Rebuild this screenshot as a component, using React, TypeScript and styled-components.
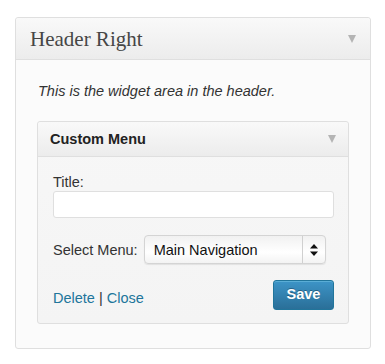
import styled, { createGlobalStyle } from 'styled-components'

const GlobalStyle = createGlobalStyle`
    html, body {
        margin: 0;
        padding: 0;
        background: #ffffff;
        font-family: "Liberation Sans", Arial, sans-serif;
        color: #333333;
    }
`
const Page = styled.div`
    padding: 17px 14px 15px 15px;
`
const Sidebar = styled.div`
    width: 354px;
    height: 330px;
    border: 1px solid #dfdfdf;
    border-radius: 3px;
    background: #fbfbfb;
    display: flex;
    flex-direction: column;
`
const SidebarHeader = styled.div`
    height: 41px;
    display: flex;
    align-items: center;
    justify-content: space-between;
    padding: 0 14px 0 14px;
    background: linear-gradient(to bottom, #f9f9f9, #ececec);
    border-bottom: 1px solid #dfdfdf;
    border-radius: 3px 3px 0 0;
`
const SidebarTitle = styled.h3`
    margin: 0;
    font-family: "Liberation Serif", Georgia, serif;
    font-weight: normal;
    font-size: 21px;
    color: #464646;
    padding-top: 1px;
`
const Toggle = styled.span<{ $size: number }>`
    width: 0;
    height: 0;
    border-left: ${props => props.$size / 2}px solid transparent;
    border-right: ${props => props.$size / 2}px solid transparent;
    border-top: ${props => props.$size - 1}px solid #b4b4b4;
`
const SidebarBody = styled.div`
    padding: 22px 21px 0 21px;
`
const Description = styled.p`
    margin: 0 0 21px 1px;
    font-style: italic;
    font-size: 14.5px;
    line-height: 18px;
    color: #333333;
`
const Widget = styled.div`
    height: 201px;
    border: 1px solid #dfdfdf;
    border-radius: 3px;
    background: linear-gradient(to bottom, #f7f7f7, #f4f4f4);
`
const WidgetHeader = styled.div`
    height: 34px;
    display: flex;
    align-items: center;
    justify-content: space-between;
    padding: 0 12px 0 12px;
    background: linear-gradient(to bottom, #f9f9f9, #ececec);
    border-bottom: 1px solid #dfdfdf;
    border-radius: 3px 3px 0 0;
`
const WidgetTitle = styled.h4`
    margin: 0;
    font-size: 14.5px;
    font-weight: bold;
    color: #222222;
`
const WidgetBody = styled.div`
    padding: 17px 14px 0 15px;
    font-size: 14.5px;
    color: #333333;
`
const Label = styled.div`
    line-height: 17px;
`
const TextInput = styled.input`
    display: block;
    box-sizing: border-box;
    width: 100%;
    height: 27px;
    border: 1px solid #dfdfdf;
    border-radius: 3px;
    background: #ffffff;
    outline: none;
`
const SelectRow = styled.div`
    display: flex;
    align-items: center;
    gap: 6px;
    margin-top: 17px;
`
const SelectBox = styled.div`
    width: 182px;
    height: 29px;
    box-sizing: border-box;
    display: flex;
    align-items: stretch;
    border: 1px solid #d4d4d4;
    border-radius: 4px;
    background: linear-gradient(to bottom, #f1f1f1, #ffffff 60%, #f3f3f3);
    box-shadow: 0 1px 1px rgba(0, 0, 0, 0.08);
`
const SelectValue = styled.div`
    flex: 1;
    display: flex;
    align-items: center;
    padding-left: 9px;
    font-size: 14.5px;
    color: #111111;
`
const SelectArrows = styled.div`
    width: 22px;
    border-left: 1px solid #d0d0d0;
    display: flex;
    align-items: center;
    justify-content: center;
`
const Actions = styled.div`
    display: flex;
    align-items: center;
    justify-content: space-between;
    margin-top: 16px;
`
const Links = styled.div`
    font-size: 14.5px;
    color: #333333;
    padding-top: 5px;

    & a {
        color: #21759b;
        text-decoration: none;
    }
`
const SaveButton = styled.button`
    width: 61px;
    height: 30px;
    border: 1px solid #21759b;
    border-radius: 3px;
    background: linear-gradient(to bottom, #3d94c7, #2a6f98);
    color: #ffffff;
    font-family: "Liberation Sans", Arial, sans-serif;
    font-size: 14.5px;
    font-weight: bold;
    text-shadow: 0 -1px 0 rgba(0, 0, 0, 0.3);
    box-shadow: inset 0 1px 0 rgba(120, 200, 230, 0.5);
    padding: 0 0 2px 0;
`

export default function App() {
    return (
        <Page>
            <GlobalStyle />
            <Sidebar>
                <SidebarHeader>
                    <SidebarTitle>Header Right</SidebarTitle>
                    <Toggle $size={9} />
                </SidebarHeader>
                <SidebarBody>
                    <Description>This is the widget area in the header.</Description>
                    <Widget>
                        <WidgetHeader>
                            <WidgetTitle>Custom Menu</WidgetTitle>
                            <Toggle $size={9} />
                        </WidgetHeader>
                        <WidgetBody>
                            <Label>Title:</Label>
                            <TextInput type="text" />
                            <SelectRow>
                                <span>Select Menu:</span>
                                <SelectBox>
                                    <SelectValue>Main Navigation</SelectValue>
                                    <SelectArrows>
                                        <svg width="8" height="12" viewBox="0 0 8 12">
                                            <path d="M4 0 L8 4.5 L0 4.5 Z" fill="#111" />
                                            <path d="M4 12 L8 7.5 L0 7.5 Z" fill="#111" />
                                        </svg>
                                    </SelectArrows>
                                </SelectBox>
                            </SelectRow>
                            <Actions>
                                <Links>
                                    <a href="#">Delete</a> | <a href="#">Close</a>
                                </Links>
                                <SaveButton>Save</SaveButton>
                            </Actions>
                        </WidgetBody>
                    </Widget>
                </SidebarBody>
            </Sidebar>
        </Page>
    )
}
